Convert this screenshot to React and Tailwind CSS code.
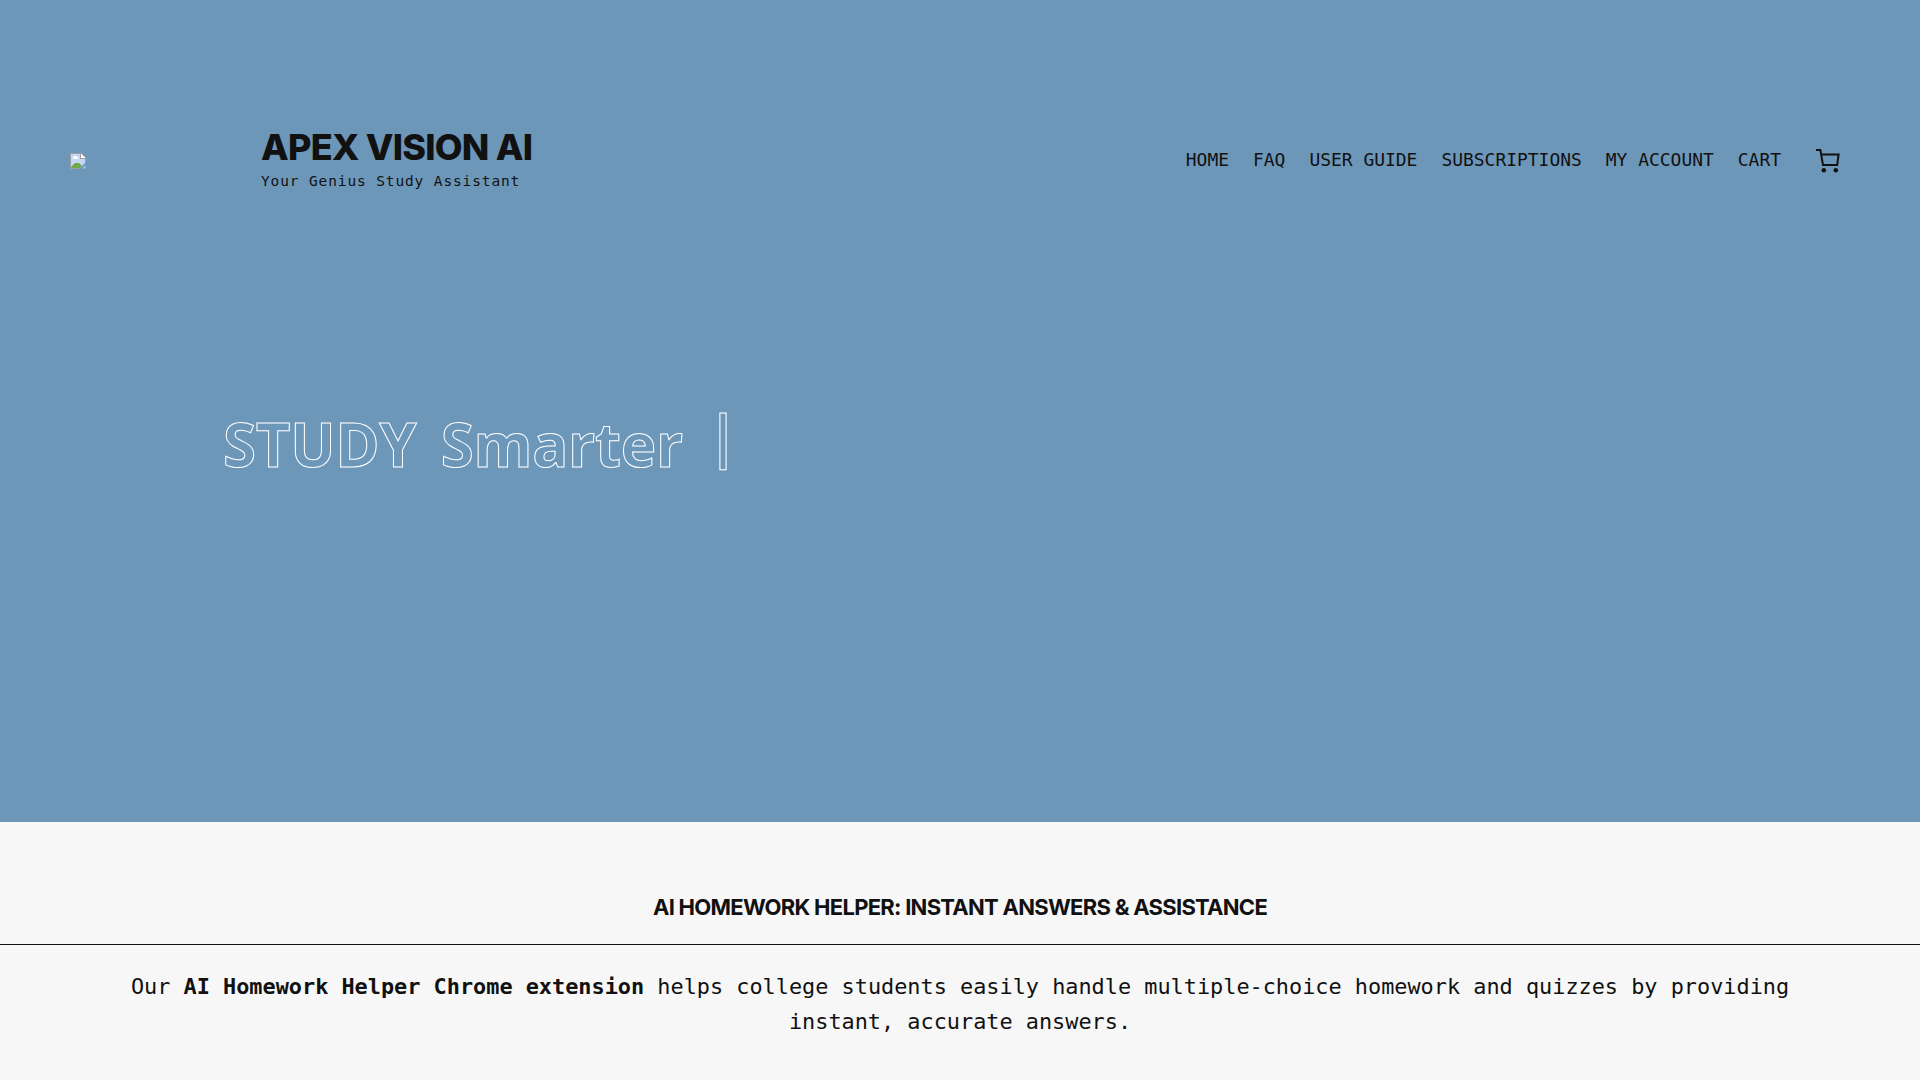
import React from "react";

const links = ["HOME", "FAQ", "USER GUIDE", "SUBSCRIPTIONS", "MY ACCOUNT", "CART"];

function BrokenImage() {
  return (
    <svg className="block h-4 w-4" viewBox="0 0 16 16" shapeRendering="crispEdges">
      <path d="M0 0H11L16 5V16H0Z" fill="#a0a0a0" />
      <path d="M1 1H10V6H15V15H1Z" fill="#c4d5f5" />
      <path d="M3 4H4V3H7V4H8V6H3Z" fill="#fff" />
      <path d="M11 1L15 5H11Z" fill="#fff" />
      <path d="M1 15V14L5 10H9L12 13L10 15Z" fill="#6dab48" shapeRendering="auto" />
      <path d="M9 16L16 9V12L12 16Z" fill="#6d97b9" shapeRendering="auto" />
    </svg>
  );
}

function CartIcon() {
  return (
    <svg className="block h-6 w-6" viewBox="0 0 24 24" fill="none" stroke="#111" strokeWidth="2">
      <path d="M0 1H4.4L7 16H21.2L22.6 5.5H5" />
      <circle cx="7.8" cy="21.3" r="2.3" fill="#111" stroke="none" />
      <circle cx="19.8" cy="21.3" r="2.3" fill="#111" stroke="none" />
    </svg>
  );
}

export default function App() {
  return (
    <div className="h-[1080px] w-full overflow-hidden bg-[#f7f7f7] font-['DejaVu_Sans_Mono',monospace] text-[#111]">
      <section className="h-[822px] bg-[#6d97b9] pt-[120px]">
        <header className="flex h-20 items-center justify-between pr-20 pl-[70px]">
          <div className="flex items-center">
            <div className="w-[191px] pt-0.5">
              <BrokenImage />
            </div>
            <div className="pb-[3px]">
              <h1 className="font-[Inter,sans-serif] text-[36px] leading-[44px] font-extrabold tracking-[-0.74px] whitespace-nowrap">APEX VISION AI</h1>
              <p className="text-[14.5px] leading-6 tracking-[0.87px] whitespace-nowrap">Your Genius Study Assistant</p>
            </div>
          </div>
          <div className="flex items-center">
            <nav className="flex gap-6 text-[17.95px] leading-6">
              {links.map((l) => (
                <a key={l} className="whitespace-nowrap">{l}</a>
              ))}
            </nav>
            <div className="ml-[35px] pt-0.5">
              <CartIcon />
            </div>
          </div>
        </header>
        <div className="mt-[190px] flex items-center pl-[223px] font-['Open_Sans',sans-serif] text-[60px] leading-[90px] font-bold tracking-[-0.3px] whitespace-pre text-transparent [-webkit-text-stroke:1px_#fff]">
          <span className="[word-spacing:9px]">STUDY Smarter</span>
          <span className="ml-[24px] pb-[18px] text-[58px]">|</span>
        </div>
      </section>
      <section className="pt-[60px] text-center">
        <h2 className="border-b border-[#111] pb-[12px] font-[Inter,sans-serif] text-[22px] leading-[50px] font-bold tracking-[-0.72px]">
          AI HOMEWORK HELPER: INSTANT ANSWERS &amp; ASSISTANCE
        </h2>
        <p className="mx-auto mt-[24px] w-[1720px] text-[21.87px] leading-[35px]">
          Our <strong>AI Homework Helper Chrome extension</strong> helps college students easily handle multiple-choice homework and quizzes by providing
          instant, accurate answers.
        </p>
      </section>
    </div>
  );
}
